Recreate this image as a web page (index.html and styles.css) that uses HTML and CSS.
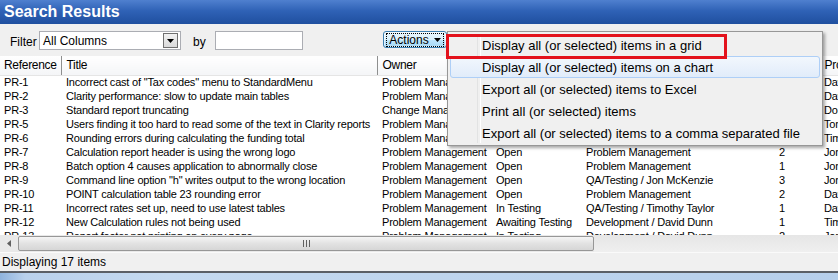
FILE: index.html
```html
<!DOCTYPE html>
<html lang="en">
<head>
    <meta charset="UTF-8">
    <title>Search Results</title>
    <link rel="stylesheet" href="styles.css">
</head>
<body>
    <div class="window">
        <div class="titlebar">Search Results</div>

        <div class="toolbar">
            <span class="label label-filter">Filter</span>
            <div class="combo">
                <span class="combo-text">All Columns</span>
                <span class="combo-btn">
                    <svg width="7" height="4" viewBox="0 0 7 4"><path d="M0 0h7L3.5 4z" fill="#000"/></svg>
                </span>
            </div>
            <span class="label label-by">by</span>
            <div class="textbox"></div>
            <button class="actions">
                <span class="focus">Actions
                    <svg width="7" height="4" viewBox="0 0 7 4"><path d="M0 0h7L3.5 4z" fill="#000"/></svg>
                </span>
            </button>
        </div>

        <div class="grid">
            <table>
                <colgroup>
                    <col class="c-ref"><col class="c-title"><col class="c-owner"><col class="c-status">
                    <col class="c-team"><col class="c-prio"><col class="c-by">
                </colgroup>
                <thead>
                    <tr><th>Reference</th><th>Title</th><th>Owner</th><th>Status</th><th>Team</th><th>Priority</th><th>Proposed By</th></tr>
                </thead>
                <tbody>
                    <tr><td>PR-1</td><td>Incorrect cast of "Tax codes" menu to StandardMenu</td><td>Problem Management</td><td>Open</td><td>Development / David Dunn</td><td>2</td><td>David Dunn</td></tr>
                    <tr><td>PR-2</td><td>Clarity performance: slow to update main tables</td><td>Problem Management</td><td>Open</td><td>Problem Management</td><td>1</td><td>David Dunn</td></tr>
                    <tr><td>PR-3</td><td>Standard report truncating</td><td>Change Management</td><td>Open</td><td>Development / David Dunn</td><td>2</td><td>Don Walker</td></tr>
                    <tr><td>PR-5</td><td>Users finding it too hard to read some of the text in Clarity reports</td><td>Problem Management</td><td>Open</td><td>Problem Management</td><td>3</td><td>Tom Harris</td></tr>
                    <tr><td>PR-6</td><td>Rounding errors during calculating the funding total</td><td>Problem Management</td><td>Open</td><td>QA/Testing / Timothy Taylor</td><td>1</td><td>Timothy Taylor</td></tr>
                    <tr><td>PR-7</td><td>Calculation report header is using the wrong logo</td><td>Problem Management</td><td>Open</td><td>Problem Management</td><td>2</td><td>Jon McKenzie</td></tr>
                    <tr><td>PR-8</td><td>Batch option 4 causes application to abnormally close</td><td>Problem Management</td><td>Open</td><td>Problem Management</td><td>1</td><td>Jon McKenzie</td></tr>
                    <tr><td>PR-9</td><td>Command line option "h" writes output to the wrong location</td><td>Problem Management</td><td>Open</td><td>QA/Testing / Jon McKenzie</td><td>3</td><td>Jon McKenzie</td></tr>
                    <tr><td>PR-10</td><td>POINT calculation table 23 rounding error</td><td>Problem Management</td><td>Open</td><td>Problem Management</td><td>2</td><td>David Dunn</td></tr>
                    <tr><td>PR-11</td><td>Incorrect rates set up, need to use latest tables</td><td>Problem Management</td><td>In Testing</td><td>QA/Testing / Timothy Taylor</td><td>1</td><td>David Dunn</td></tr>
                    <tr><td>PR-12</td><td>New Calculation rules not being used</td><td>Problem Management</td><td>Awaiting Testing</td><td>Development / David Dunn</td><td>1</td><td>Timothy Taylor</td></tr>
                    <tr><td>PR-13</td><td>Report footer not printing on every page</td><td>Problem Management</td><td>In Testing</td><td>Development / David Dunn</td><td>2</td><td>Jon McKenzie</td></tr>
                </tbody>
            </table>
        </div>

        <div class="hscroll">
            <span class="arrow">
                <svg width="4" height="7" viewBox="0 0 4 7"><path d="M4 0v7L0 3.5z" fill="#606060"/></svg>
            </span>
            <span class="thumb"><span class="grip"></span></span>
            <span class="track"></span>
        </div>

        <div class="status">Displaying 17 items</div>
        <div class="taskbar"></div>

        <div class="menu">
            <div class="menu-item">Display all (or selected) items in a grid</div>
            <div class="menu-item hover">Display all (or selected) items on a chart</div>
            <div class="menu-item">Export all (or selected) items to Excel</div>
            <div class="menu-item">Print all (or selected) items</div>
            <div class="menu-item">Export all (or selected) items to a comma separated file</div>
        </div>
        <div class="callout"></div>
    </div>
</body>
</html>
```

FILE: styles.css
```css
* {
    margin: 0;
    padding: 0;
    box-sizing: border-box;
}

body, html {
    height: 100%;
    background-color: #f0f0f0;
    font-family: "Liberation Sans", Arial, sans-serif;
    overflow: hidden;
}

.window {
    position: relative;
    width: 838px;
    height: 280px;
    display: flex;
    flex-direction: column;
    background: #f0f0f0;
    color: #000;
}

/* Title bar */
.titlebar {
    height: 24px;
    padding-left: 4px;
    line-height: 23px;
    font-size: 16px;
    font-weight: bold;
    color: #fff;
    background: linear-gradient(to bottom, #4f80cf 0%, #2f62b6 45%, #1f4f9f 100%);
}

/* Filter toolbar */
.toolbar {
    height: 32px;
    display: flex;
    align-items: flex-start;
    font-size: 12px;
}

.label {
    margin-top: 11px;
    line-height: 14px;
}

.label-filter { margin-left: 10px; width: 29px; }
.label-by { margin-left: 12px; width: 22px; }

.combo {
    margin-top: 7px;
    width: 142px;
    height: 19px;
    display: flex;
    align-items: center;
    justify-content: space-between;
    border: 1px solid #abadb3;
    background: #fff;
    padding: 0 2px 0 3px;
}

.combo-btn {
    width: 15px;
    height: 15px;
    display: flex;
    align-items: center;
    justify-content: center;
    border: 1px solid #707070;
    background: linear-gradient(to bottom, #f2f2f2, #dadada);
}

.textbox {
    margin-top: 7px;
    width: 88px;
    height: 19px;
    border: 1px solid #abadb3;
    background: #fff;
}

.actions {
    margin: 7px 0 0 80px;
    width: 64px;
    height: 17px;
    border: 1px solid #3c7fb1;
    border-radius: 3px;
    background: linear-gradient(to bottom, #eaf6fd 0%, #d9f0fc 50%, #bee6fd 51%, #a7d9f5 100%);
    box-shadow: inset 0 0 0 1px rgba(255,255,255,0.6);
    font-family: "Liberation Sans", Arial, sans-serif;
    font-size: 12px;
    display: flex;
    align-items: center;
    justify-content: center;
}

.focus {
    display: flex;
    align-items: center;
    gap: 5px;
    padding: 0 2px;
    line-height: 12px;
    border: 1px dotted #000;
}

/* Grid */
.grid {
    height: 179px;
    overflow: hidden;
    background: #fff;
}

table {
    table-layout: fixed;
    width: 1100px;
    border-collapse: collapse;
    font-size: 11px;
    letter-spacing: -0.2px;
}

.c-ref { width: 61px; }
.c-title { width: 316px; }
.c-owner { width: 114px; }
.c-status { width: 90px; }
.c-team { width: 193px; }
.c-prio { width: 45px; }
.c-by { width: 281px; }

th, td {
    text-align: left;
    font-weight: normal;
    white-space: nowrap;
    overflow: hidden;
    padding: 0 0 0 5px;
}

th:first-child, td:first-child { padding-left: 4px; }

th {
    height: 19px;
    line-height: 18px;
    font-size: 12px;
    letter-spacing: -0.3px;
    background: linear-gradient(to bottom, #fff, #f4f5f7);
    border-bottom: 1px solid #e5e5e5;
    border-right: 1px solid #8e8f8f;
}

td {
    height: 14px;
    line-height: 13px;
}

/* Horizontal scrollbar */
.hscroll {
    height: 18px;
    display: flex;
    align-items: stretch;
    background: #e9e9e9;
    border-bottom: 1px solid #fafafa;
}

.arrow {
    width: 18px;
    display: flex;
    align-items: center;
    justify-content: center;
}

.thumb {
    width: 576px;
    margin: 1px 0;
    border: 1px solid #979797;
    border-radius: 2px;
    background: linear-gradient(to bottom, #f5f5f5, #e2e2e2 50%, #d6d6d6);
    display: flex;
    align-items: center;
    justify-content: center;
}

.grip {
    width: 7px;
    height: 7px;
    background: repeating-linear-gradient(to right, #606060 0 1px, transparent 1px 3px);
}

.track {
    flex: 1;
    background: linear-gradient(to bottom, #e6e6e6, #efefef);
}

/* Status bar */
.status {
    height: 18px;
    padding-left: 2px;
    line-height: 18px;
    font-size: 12px;
}

.taskbar {
    flex: 1;
    border-top: 2px solid #5a5f66;
    background: linear-gradient(to right, #8fb3dd 0%, #b9d1ec 3%, #c4d9f0 20%, #b6cfeb 100%);
}

/* Actions drop-down menu */
.menu {
    position: absolute;
    left: 447px;
    top: 31px;
    width: 376px;
    height: 115px;
    padding: 2px;
    background: #f0f0f0;
    border: 1px solid #979797;
    box-shadow: 2px 2px 3px rgba(0, 0, 0, 0.35);
    font-size: 13px;
}

.menu::before {
    content: "";
    position: absolute;
    top: 2px;
    bottom: 2px;
    left: 29px;
    width: 2px;
    border-left: 1px solid #e2e3e3;
    border-right: 1px solid #fff;
}

.menu-item {
    position: relative;
    height: 22px;
    line-height: 21px;
    padding-left: 31px;
    border: 1px solid transparent;
    border-radius: 3px;
}

.menu-item.hover {
    border-color: #aecff7;
    background: linear-gradient(to bottom, #f2f7fd, #e1ecfa);
}

/* Red callout around the first menu item */
.callout {
    position: absolute;
    left: 446px;
    top: 34px;
    width: 281px;
    height: 25px;
    border: 3px solid #e3121c;
}
```
